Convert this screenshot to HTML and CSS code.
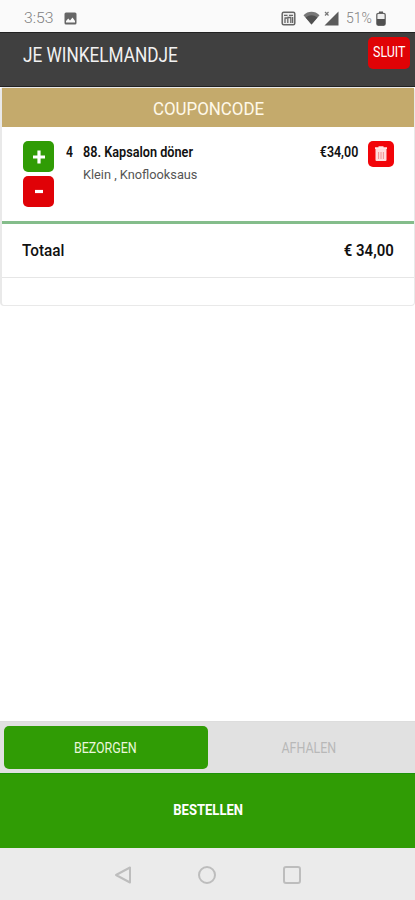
FILE: index.html
```html
<!DOCTYPE html>
<html lang="nl">
<head>
<meta charset="utf-8">
<title>Je winkelmandje</title>
<link rel="stylesheet" href="styles.css">
</head>
<body>
<div class="statusbar">
  <span class="clock">3:53</span>
  <svg class="pic" width="13" height="13" viewBox="0 0 13 13"><rect x=".5" y=".5" width="12" height="12" rx="1.5" fill="#666"/><path d="M2 10.5V9l2.3-2.5L6 8.5l2.5-3L11 9v1.5z" fill="#fafafa"/></svg>
  <svg class="nfc" width="15" height="15" viewBox="0 0 15 15"><rect x="1.2" y="1.2" width="12.6" height="12.6" rx="1.5" fill="#eee" stroke="#666" stroke-width="1.5"/><path d="M3 4.3h3.5M8 4.3h4M4 12V7.5M6.8 12V6.5h3V12M11.6 6v6M3.5 7h2.5" stroke="#666" stroke-width="1.3" fill="none"/></svg>
  <svg class="wifi" width="17" height="14" viewBox="0 0 17 14"><path d="M.5 4.2C5-.4 12-.4 16.500 4.200L8.500 13.600z" fill="#777"/><path d="M2.600 6.600Q8.500 2 14.400 6.600L8.500 13.600z" fill="#505050"/></svg>
  <svg class="signal" width="15" height="15" viewBox="0 0 15 15"><path d="M14.500.5v14H.5z" fill="#5b5b5b"/><path d="M1 1l3.500 3.500M4.500 1L1 4.500" stroke="#777" stroke-width="1.200"/></svg>
  <span class="charge">51%</span>
  <svg class="battery" width="10" height="15" viewBox="0 0 10 15"><path d="M3 .5h4v2H3z" fill="#555"/><rect x=".8" y="2.300" width="8.400" height="12" rx="1.500" fill="#eee" stroke="#666" stroke-width="1.300"/><path d="M1 8h8v6H1z" fill="#505050"/></svg>
</div>

<header class="header">
  <h1 class="title">JE WINKELMANDJE</h1>
  <button class="close"><span>SLUIT</span></button>
</header>

<main class="cart">
  <div class="coupon"><span>COUPONCODE</span></div>
  <section class="item">
    <div class="steppers">
      <button class="step plus" aria-label="Meer"><svg width="30" height="30" viewBox="0 0 30 30"><path d="M16 8.500v13M10 15h12" stroke="#fff" stroke-width="3.200"/></svg></button>
      <button class="step minus" aria-label="Minder"><svg width="30" height="30" viewBox="0 0 30 30"><path d="M12 14.500h8" stroke="#fff" stroke-width="3.200"/></svg></button>
    </div>
    <span class="qty">4</span>
    <div class="desc">
      <div class="name"><span>88. Kapsalon döner</span></div>
      <div class="extras"><span>Klein , Knoflooksaus</span></div>
    </div>
    <span class="price">€34,00</span>
    <button class="trash" aria-label="Verwijder"><svg width="14" height="16" viewBox="0 0 14 16"><path d="M1 2.200h12M4.500 1.200h5" stroke="#ffe5e5" stroke-width="1.800"/><path d="M1.500 3h11v11q0 1-1 1h-9q-1 0-1-1z" fill="#ffdcdc"/><path d="M4.600 6v7M7 6v7M9.400 6v7" stroke="#e88" stroke-width=".9"/></svg></button>
  </section>
  <div class="total"><span class="label">Totaal</span><span class="amount">€ 34,00</span></div>
  <div class="note"></div>
</main>

<footer class="footer">
  <div class="modes">
    <button class="mode active"><span class="deliver">BEZORGEN</span></button>
    <button class="mode"><span class="pickup">AFHALEN</span></button>
  </div>
  <button class="order"><span>BESTELLEN</span></button>
  <nav class="navbar">
    <svg width="18" height="20" viewBox="0 0 18 20"><path d="M16 2.500v15L2 10z" fill="none" stroke="#bdbdbd" stroke-width="2" stroke-linejoin="round"/></svg>
    <svg width="20" height="20" viewBox="0 0 20 20"><circle cx="10" cy="10" r="8" fill="none" stroke="#bdbdbd" stroke-width="2"/></svg>
    <svg width="20" height="20" viewBox="0 0 20 20"><rect x="2" y="2" width="16" height="16" rx="2" fill="none" stroke="#bdbdbd" stroke-width="2"/></svg>
  </nav>
</footer>
</body>
</html>
```
FILE: styles.css
```css
* { box-sizing: border-box; }
body {
  margin: 0;
  height: 900px;
  display: flex;
  flex-direction: column;
  background: #fff;
  color: #111;
  font-family: Roboto, sans-serif;
  overflow: hidden;
}
button { border: 0; padding: 0; font: inherit; color: inherit; background: none; }
svg { display: block; flex: none; }
span { display: inline-block; white-space: nowrap; }

.statusbar {
  height: 32px;
  flex: none;
  display: flex;
  align-items: center;
  padding: 4px 29px 0 24px;
  background: #fafafa;
  color: #808080;
  font-size: 15px;
  font-weight: 300;
}
.clock { width: 40px; transform: scaleX(1.050); transform-origin: left; }
.nfc { margin-left: auto; }
.wifi { margin-left: 7px; }
.signal { margin-left: 4px; }
.charge { width: 26px; margin-left: 7px; font-size: 14px; transform-origin: left; }
.battery { margin-left: 4px; }

.header {
  height: 55px;
  flex: none;
  display: flex;
  justify-content: space-between;
  align-items: flex-start;
  padding: 5px 5px 0 23px;
  background: #404040;
  border-top: 1px solid #222;
  border-bottom: 1px solid #222;
  color: #fff;
}
.title { margin: 4px 0 0; font-size: 20px; line-height: 26px; font-weight: 400; transform: scaleX(.86); transform-origin: left; white-space: nowrap; color: #f2f2f2; }
.close { width: 42px; height: 32px; border-radius: 5px; background: #e00306; font-size: 14px; display: flex; justify-content: center; align-items: center; margin-top: -1px; padding-bottom: 2px; }
.close span { transform: scaleX(.89); }

.cart {
  flex: none;
  height: 219px;
  border: 1px solid #e9e9e9;
  border-left-width: 2px;
  border-radius: 4px;
}
.coupon { height: 39px; background: #c4aa6c; color: #fff9e9; font-size: 19px; line-height: 41px; text-align: center; padding-left: 1px; }
.coupon span { transform: scaleX(.89); }

.item { height: 97px; display: flex; align-items: flex-start; padding: 14px 20px 0 21px; border-bottom: 3px solid #84bd8b; }
.steppers { display: grid; gap: 4px; width: 31px; }
.step { width: 31px; height: 31px; border-radius: 5px; }
.plus { background: #309c05; }
.minus { background: #e00207; }
.qty { width: 17px; margin-left: 12px; font-size: 14px; line-height: 22px; font-weight: 600; transform: scaleX(.87); transform-origin: left; }
.desc { flex: 1; line-height: 22px; }
.name { font-size: 14px; font-weight: 600; }
.extras { font-size: 13.5px; color: #555; }
.name span { transform: scaleX(.905); transform-origin: left; }
.extras span { transform: scaleX(.945); transform-origin: left; }
.price { font-size: 14px; line-height: 22px; font-weight: 600; transform: scaleX(.89); transform-origin: right; }
.trash { width: 26px; height: 26px; margin-left: 10px; border-radius: 5px; background: #f20409; display: grid; place-items: center; }

.total { height: 54px; display: flex; justify-content: space-between; padding: 0 20px; border-bottom: 1px solid #e6e6e6; font-size: 17px; line-height: 52px; font-weight: 500; }
.label { transform: scaleX(.9); transform-origin: left; }
.amount { transform: scaleX(.88); transform-origin: right; font-weight: 600; }

.footer { margin-top: auto; flex: none; }
.modes { height: 52px; display: flex; padding: 5px 4px; background: #e1e1e1; border-top: 1px solid #ddd; }
.mode { flex: 1; height: 43px; border-radius: 5px; font-size: 14px; color: #b8b8b8; margin-top: -1px; }
.mode.active { background: #309c05; color: #eaf7dc; }
.deliver, .pickup { transform: scaleX(.89); }
.order { display: block; width: 100%; height: 75px; background: #309c05; color: #fff; font-size: 15px; font-weight: 700; border-top: 1px solid #1e920a; padding: 0 0 3px 1px; }
.order span { transform: scaleX(.87); }
.navbar { height: 52px; display: flex; justify-content: center; align-items: center; gap: 65px; padding: 1px 0 0 1px; background: #ebebeb; }
```
